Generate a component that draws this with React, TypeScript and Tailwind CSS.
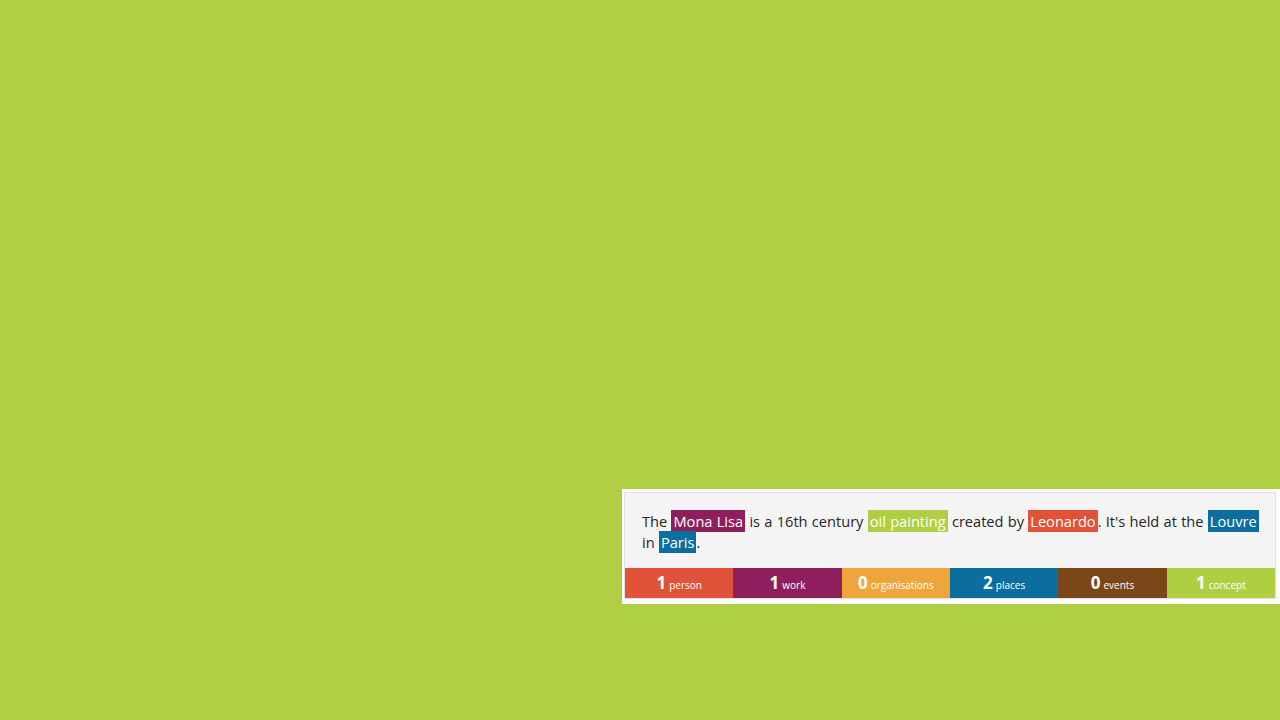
import React from "react";

const tabs = [
  { n: "1", label: "person", bg: "bg-[#e05338]" },
  { n: "1", label: "work", bg: "bg-[#8e1f5c]" },
  { n: "0", label: "organisations", bg: "bg-[#eea63b]" },
  { n: "2", label: "places", bg: "bg-[#0b6e9f]" },
  { n: "0", label: "events", bg: "bg-[#7c4718]" },
  { n: "1", label: "concept", bg: "bg-[#afcf43]" },
];

function Hl({ c, children }: { c: string; children: React.ReactNode }) {
  return <span className={`${c} text-white px-[2px] py-[1px]`}>{children}</span>;
}

export default function App() {
  return (
    <div
      className="min-h-screen w-full bg-[#b0cf45] pt-[489px] pl-[622px]"
      style={{ fontFamily: '"Open Sans", "Noto Sans", sans-serif' }}
    >
      <div className="bg-white p-[2px] pt-[3px] pr-[4px] pb-[5px] w-[658px]">
        <div className="border border-[#e2e2e2] bg-[#f4f4f4]">
          <p className="pl-[17px] pr-[12px] pt-[18px] pb-[15px] text-[14.6px] leading-[21px] text-[#262626] [word-spacing:0.5px]">
            The <Hl c="bg-[#8e1f5c]">Mona Lisa</Hl> is a 16th century{" "}
            <Hl c="bg-[#afcf43]">oil painting</Hl> created by{" "}
            <Hl c="bg-[#e05338]">Leonardo</Hl>. It's held at the{" "}
            <Hl c="bg-[#0b6e9f]">Louvre</Hl> in <Hl c="bg-[#0b6e9f]">Paris</Hl>.
          </p>
          <div className="grid grid-cols-6 h-[30px]">
            {tabs.map((t) => (
              <div
                key={t.label}
                className={`${t.bg} flex items-center justify-center text-white`}
              >
                <span className="text-[17px] font-bold leading-none -mt-[2px]">{t.n}</span>
                <span className="text-[10px] ml-[3px] mt-[4px] leading-none">{t.label}</span>
              </div>
            ))}
          </div>
        </div>
      </div>
    </div>
  );
}
